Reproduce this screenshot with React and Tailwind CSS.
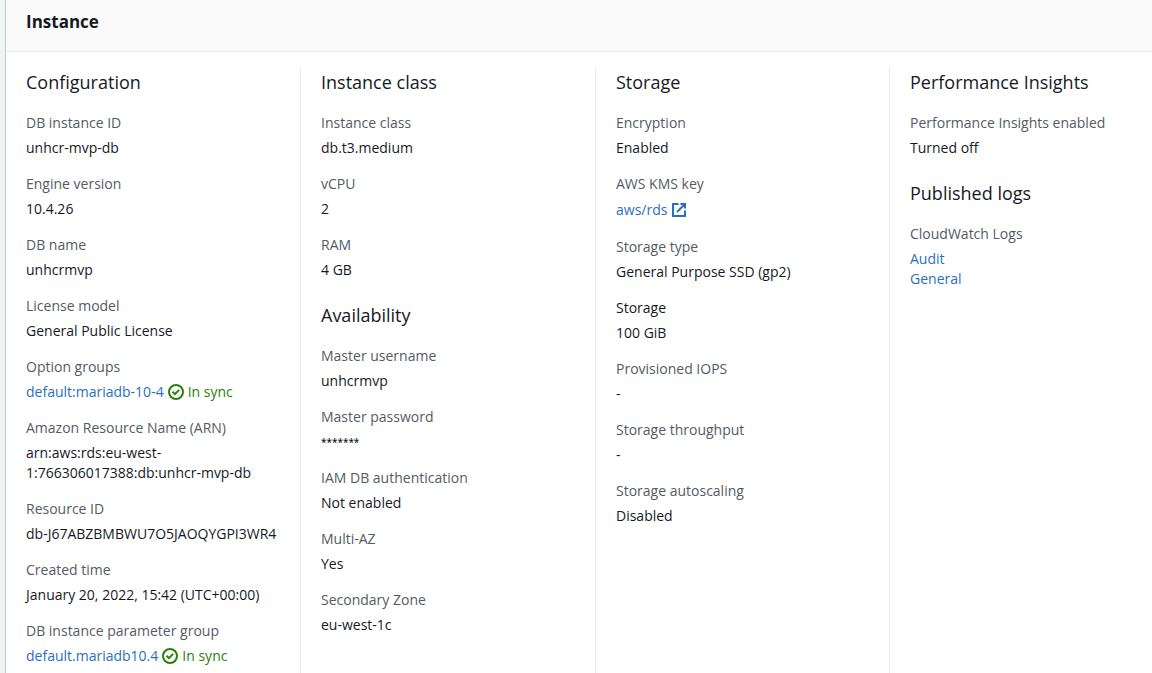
import React from "react";

function CheckCircle() {
  return (
    <svg viewBox="0 0 16 16" className="size-4 shrink-0" fill="none" stroke="currentColor" strokeWidth="2" aria-hidden="true">
      <circle cx="8" cy="8" r="7" />
      <path d="M4.5 7.8l2.4 2.4 4.3-4.3" />
    </svg>
  );
}

function ExternalIcon() {
  return (
    <svg viewBox="0 0 16 16" className="size-4 shrink-0" fill="none" stroke="currentColor" strokeWidth="2" aria-hidden="true">
      <path d="M14 8.5V14H2V2h5.5" />
      <path d="M9.5 2H14v4.5" />
      <path d="M6 10l7.5-7.5" />
    </svg>
  );
}

function Link({ children }) {
  return (
    <a href="#" className="text-[#2a70bd] hover:underline">
      {children}
    </a>
  );
}

function Synced({ children }) {
  return (
    <span className="flex items-center gap-1">
      <Link>{children}</Link>
      <span className="flex items-center gap-1 text-[#2b8009]">
        <CheckCircle />
        In sync
      </span>
    </span>
  );
}

function Field({ label, dark, children }) {
  return (
    <div className="flex flex-col gap-[5px]">
      <dt className={dark ? "text-[#16191f]" : "text-[#545b64]"}>{label}</dt>
      <dd className="text-[#16191f]">{children}</dd>
    </div>
  );
}

function Section({ title, children }) {
  return (
    <section className="flex flex-col gap-5">
      <h3 className="text-lg leading-[22px] text-[#16191f]">{title}</h3>
      <dl className="flex flex-col gap-4">{children}</dl>
    </section>
  );
}

function Column({ first, children }) {
  return (
    <div className={first ? "flex flex-col gap-6 pt-1 pr-4 pl-5" : "flex flex-col gap-6 border-l border-[#eaeded] pt-1 pr-4 pl-5"}>
      {children}
    </div>
  );
}

export default function App() {
  return (
    <div className="flex min-h-screen bg-[#f2f3f3] pl-[5px] font-['Open_Sans','Noto_Sans',sans-serif] text-sm leading-5 font-medium">
      <main className="flex grow flex-col border-l border-[#c8cccc] bg-white">
        <header className="border-b border-[#eaeded] bg-[#fafafa] px-5 pt-[11px] pb-[18px]">
          <h2 className="text-[17px] leading-[22px] font-bold text-[#16191f]">Instance</h2>
        </header>
        <div className="grid grow grid-cols-[294fr_295fr_294fr_263fr] pt-[15px]">
          <Column first>
            <Section title="Configuration">
              <Field label="DB instance ID">unhcr-mvp-db</Field>
              <Field label="Engine version">10.4.26</Field>
              <Field label="DB name">unhcrmvp</Field>
              <Field label="License model">General Public License</Field>
              <Field label="Option groups">
                <Synced>default:mariadb-10-4</Synced>
              </Field>
              <Field label="Amazon Resource Name (ARN)">
                arn:aws:rds:eu-west-
                <br />
                1:766306017388:db:unhcr-mvp-db
              </Field>
              <Field label="Resource ID">db-J67ABZBMBWU7O5JAOQYGPI3WR4</Field>
              <Field label="Created time">January 20, 2022, 15:42 (UTC+00:00)</Field>
              <Field label="DB instance parameter group">
                <Synced>default.mariadb10.4</Synced>
              </Field>
            </Section>
          </Column>
          <Column>
            <Section title="Instance class">
              <Field label="Instance class">db.t3.medium</Field>
              <Field label="vCPU">2</Field>
              <Field label="RAM">4 GB</Field>
            </Section>
            <Section title="Availability">
              <Field label="Master username">unhcrmvp</Field>
              <Field label="Master password">
                <span className="block text-[10px] leading-5 font-semibold">*******</span>
              </Field>
              <Field label="IAM DB authentication">Not enabled</Field>
              <Field label="Multi-AZ">Yes</Field>
              <Field label="Secondary Zone">eu-west-1c</Field>
            </Section>
          </Column>
          <Column>
            <Section title="Storage">
              <Field label="Encryption">Enabled</Field>
              <Field label="AWS KMS key">
                <a href="#" className="flex items-center gap-1 leading-[22px] text-[#2a70bd] hover:underline">
                  aws/rds
                  <ExternalIcon />
                </a>
              </Field>
              <Field label="Storage type">General Purpose SSD (gp2)</Field>
              <Field label="Storage" dark>100 GiB</Field>
              <Field label="Provisioned IOPS">-</Field>
              <Field label="Storage throughput">-</Field>
              <Field label="Storage autoscaling">Disabled</Field>
            </Section>
          </Column>
          <Column>
            <Section title="Performance Insights">
              <Field label="Performance Insights enabled">Turned off</Field>
            </Section>
            <Section title="Published logs">
              <Field label="CloudWatch Logs">
                <span className="flex flex-col items-start">
                  <Link>Audit</Link>
                  <Link>General</Link>
                </span>
              </Field>
            </Section>
          </Column>
        </div>
      </main>
    </div>
  );
}
